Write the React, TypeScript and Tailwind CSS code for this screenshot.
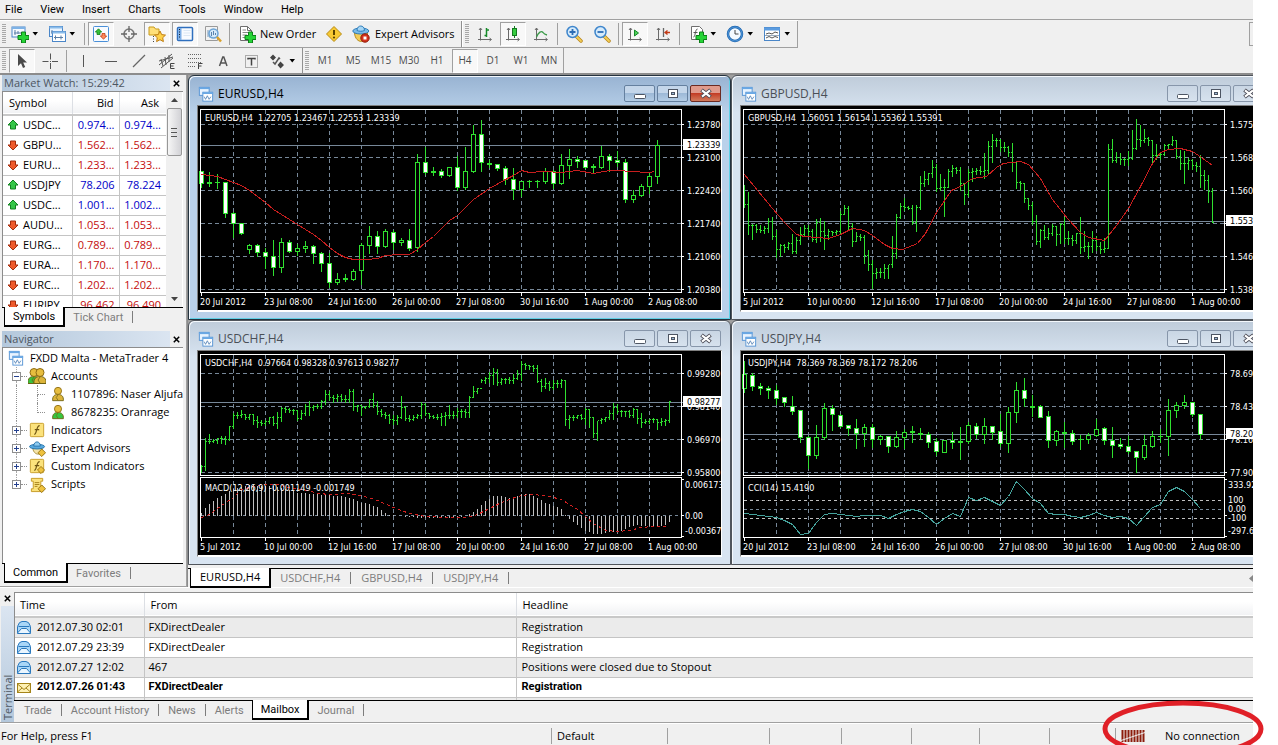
import React from "react";

/* ---------- chart data: three units per pixel ---------- */

const rows = (s: string) => s.trim().split(/\s*,\s*/).map((r) => r.split(" "));

// high, body top, body bottom, low, kind (d = filled, u = hollow)
const EURUSD = rows(`295 298 335 345 d,297 330 334 342 u,303 330 332 350 u,327 331 424 437 d,418 424 455 497 d,
454 455 483 488 d,513 519 533 545 u,513 520 542 553 d,525 541 553 590 d,503 553 586 611 d,495 511 586 602 u,
501 511 539 542 d,513 529 538 551 u,506 522 529 541 u,517 522 545 575 d,539 543 574 597 d,540 574 632 647 d,
600 621 632 638 u,603 618 623 629 u,590 597 621 624 u,510 519 596 637 u,459 492 521 543 u,474 492 524 545 d,
468 477 524 527 u,473 480 510 531 d,495 505 512 520 u,470 504 530 536 d,245 271 526 539 u,224 270 301 306 d,
283 298 301 310 u,288 297 311 315 d,283 286 311 314 u,249 285 347 354 d,222 297 346 353 u,158 186 299 300 u,
141 186 271 299 d,262 274 277 285 u,273 277 290 296 d,279 289 323 337 d,285 322 353 381 d,324 328 352 373 u,
323 327 329 347 u,321 328 329 345 u,286 297 329 335 u,291 297 335 349 d,243 279 335 338 u,229 262 281 318 u,
250 263 268 285 d,265 266 286 289 d,273 284 287 302 u,220 253 285 290 u,244 253 265 297 d,235 264 270 283 d,
260 271 382 391 d,351 369 383 391 u,334 343 371 374 u,302 312 344 364 u,201 220 314 335 u`);

const USDJPY = rows(`128 170 211 222 u,163 171 206 217 d,192 205 211 230 d,201 211 217 242 d,198 216 240 258 d,
236 238 254 264 d,231 266 281 290 d,276 277 359 374 d,353 358 412 450 d,318 357 412 420 u,254 271 359 363 u,
259 270 290 338 d,286 291 324 328 d,318 322 331 353 d,302 331 347 392 d,316 327 346 384 u,315 327 364 387 d,
350 355 364 380 u,351 355 386 404 d,338 357 385 387 u,330 342 358 391 u,323 340 343 373 u,327 345 348 365 u,
340 349 374 387 d,358 370 401 412 d,365 367 402 404 u,341 368 373 390 d,326 370 373 425 u,310 322 371 375 u,
314 325 348 362 d,297 324 350 375 u,321 325 342 364 d,285 340 377 386 d,264 283 376 402 u,189 217 284 312 u,
177 216 241 264 d,228 265 268 294 u,259 265 297 299 d,276 295 368 388 d,335 340 368 381 u,310 342 347 387 d,
335 346 369 378 d,349 363 365 394 u,343 351 364 377 u,301 335 352 356 u,324 331 367 380 d,325 367 381 417 d,
357 380 386 390 d,353 386 401 406 d,396 399 418 463 d,348 381 419 423 u,338 355 385 389 u,330 354 356 373 u,
240 277 355 411 u,250 262 277 297 u,228 253 262 272 u,250 252 290 294 d,288 289 348 363 d`);

// high, low, close
const GBPUSD = rows(`337 405 398,357 487 460,453 503 461,455 480 471,458 481 475,459 483 468,436 481 447,434 502 494,
472 557 531,513 553 519,514 540 525,507 533 513,484 543 538,492 543 505,464 517 488,456 490 468,457 490 478,
470 508 503,440 510 450,435 508 478,446 533 490,469 503 478,475 491 480,472 487 478,416 487 427,397 428 408,
400 475 462,450 522 508,478 508 492,483 504 495,487 573 550,532 596 577,562 648 605,586 620 600,587 616 602,
574 618 590,576 620 578,490 587 545,424 560 437,390 440 404,375 415 405,399 413 410,398 458 452,397 478 405,
310 412 333,296 342 322,300 337 304,261 317 287,275 359 350,303 356 346,320 432 346,289 346 297,276 312 289,
283 304 295,282 356 333,330 396 368,290 374 300,286 327 297,287 307 296,279 308 298,240 320 296,204 308 223,
183 270 205,195 224 205,198 239 227,207 238 226,221 254 241,210 297 272,268 349 330,326 353 333,333 392 378,
377 413 400,388 458 448,428 517 507,468 525 476,456 502 495,467 502 483,454 489 463,462 521 488,452 513 457,
434 514 498,476 518 498,488 519 506,480 514 485,432 545 525,475 537 523,508 560 523,476 542 505,490 535 524,
509 543 531,497 542 529,215 530 232,200 270 266,237 270 255,240 276 262,255 281 262,236 279 258,171 262 228,
140 233 202,158 223 205,169 210 198,194 220 206,203 272 251,214 262 251,241 263 247,214 250 220,213 233 217,
191 219 204,202 258 253,232 293 275,236 335 275,257 291 265,258 293 281,267 297 284,246 345 310,291 352 325,
308 392 358,345 452 450`);

const USDCHF = rows(`440 462 446,357 457 370,347 376 370,360 373 366,358 377 362,353 375 360,353 378 365,321 368 325,
284 332 293,280 300 291,275 298 290,285 304 297,286 303 290,288 320 307,291 328 314,303 323 316,303 322 310,
294 317 297,292 322 315,280 332 297,264 310 272,265 282 275,268 283 276,271 290 278,274 307 300,275 303 285,
256 293 265,248 292 268,259 277 264,255 272 266,244 272 250,215 260 228,218 247 237,229 252 240,227 250 234,
226 251 244,228 254 243,212 253 220,212 278 264,258 279 263,261 293 268,261 271 265,240 269 243,222 269 262,
248 290 280,272 294 289,281 300 291,287 317 303,290 319 306,289 320 297,231 300 268,263 308 301,289 309 303,
288 307 298,287 300 293,250 302 258,252 292 287,283 300 294,288 300 297,285 304 298,283 323 295,280 323 292,
258 300 291,276 302 291,268 298 281,272 297 281,270 297 283,231 297 238,202 238 221,207 226 210,180 194 188,
175 195 180,160 193 172,148 200 162,150 203 192,178 200 184,177 196 185,175 196 187,165 195 180,154 184 168,
128 186 140,133 155 142,138 155 145,140 160 152,138 193 190,182 221 205,177 212 195,186 216 208,185 213 196,
183 207 195,182 208 187,184 321 305,290 330 297,290 307 297,289 302 291,287 304 300,268 320 273,270 328 297,
295 358 346,306 368 308,297 315 303,294 310 299,275 305 285,254 303 268,257 287 279,273 296 281,276 296 281,
275 298 293,269 298 275,273 315 301,283 328 312,301 317 310,300 316 305,297 314 305,300 333 313,298 323 310,
300 322 307,246 312 250`);

const EURUSD_MA =
  "46 308,94 313,142 332,166 341,190 354,214 372,238 390,262 411,286 428,334 458,382 488,406 505,430 527,454 544,478 557,502 563,540 561,574 559,598 550,640 547,670 547,694 532,718 512,742 494,790 446,814 430,862 383,910 349,958 323,982 309,1006 295,1030 300,1072 299,1126 302,1174 295,1222 303,1270 296,1300 295,1330 299,1390 301,1405 297";
const GBPUSD_MA =
  "46 306,88 358,130 410,166 452,202 486,226 494,262 497,298 498,334 486,370 470,406 474,430 491,466 518,490 530,520 531,566 515,590 484,622 420,668 356,694 343,730 320,772 314,803 285,823 273,847 271,875 267,898 278,935 320,970 383,1014 440,1053 480,1078 496,1126 504,1163 461,1198 408,1233 342,1270 275,1294 240,1318 231,1353 229,1390 238,1418 255,1450 281";
const MACD_SIGNAL =
  "46 598,70 588,106 563,142 537,166 515,190 507,230 500,270 500,310 507,346 515,400 525,430 530,490 527,526 533,574 548,622 568,670 585,718 596,780 597,840 598,874 590,898 578,946 553,994 535,1030 529,1078 531,1126 545,1174 575,1222 616,1258 637,1294 640,1330 637,1366 627,1402 625,1440 625";
// bar index, value
const MACD_ANCHORS = [
  [0, 583], [1, 567], [2, 556], [3, 546], [4, 538], [6, 527], [8, 510], [12, 500], [18, 503], [24, 522], [30, 529],
  [36, 534], [38, 542], [40, 553], [42, 556], [44, 566], [46, 582], [47, 589], [49, 592], [52, 595], [54, 598],
  [64, 598], [66, 592], [68, 580], [69, 570], [70, 560], [71, 548], [72, 541], [73, 533], [76, 534], [78, 541],
  [80, 526], [82, 526], [84, 538], [86, 552], [88, 562], [90, 571], [91, 590], [92, 602], [94, 620], [96, 636],
  [98, 647], [100, 647], [102, 640], [105, 637], [107, 625], [109, 620], [113, 624], [116, 620], [117, 611],
];
const CCI = [
  587, 590, 593, 596, 599, 607, 618, 650, 647, 614, 590, 585, 589, 592, 596, 592, 592, 592, 602, 590, 580, 574, 580,
  597, 618, 600, 586, 596, 538, 548, 538, 550, 563, 535, 489, 515, 541, 557, 586, 590, 590, 594, 599, 593, 583, 592,
  598, 595, 600, 622, 595, 568, 559, 521, 508, 521, 545, 570,
];

const px = (v: number) => Math.floor(v / 3) + 0.5;
const toPoints = (s: string) =>
  s.split(",").map((p) => p.split(" ").map((v) => px(Number(v))).join(",")).join(" ");

function macdAt(i: number) {
  let k = 0;
  while (k < MACD_ANCHORS.length - 2 && MACD_ANCHORS[k + 1][0] < i) k++;
  const [a, va] = MACD_ANCHORS[k];
  const [b, vb] = MACD_ANCHORS[k + 1];
  return va + ((vb - va) * (i - a)) / (b - a);
}

const DATES_A = ["20 Jul 2012", "23 Jul 08:00", "24 Jul 16:00", "26 Jul 00:00", "27 Jul 08:00", "30 Jul 16:00", "1 Aug 00:00", "2 Aug 08:00"];
const DATES_B = ["5 Jul 2012", "10 Jul 00:00", "12 Jul 16:00", "17 Jul 08:00", "20 Jul 00:00", "24 Jul 16:00", "27 Jul 08:00", "1 Aug 00:00"];

function Candles({ data }: { data: string[][] }) {
  return (
    <g stroke="#2fe02f" strokeWidth="1">
      {data.map((r, i) => {
        const [h, t, b, l] = r.map(Number);
        const x = 15.5 + 8 * i;
        const height = px(b) - px(t);
        return (
          <g key={i}>
            <line x1={x} x2={x} y1={px(h)} y2={px(l) + 0.5} />
            {height < 1 ? (
              <line x1={x - 2.5} x2={x + 2.5} y1={px(t)} y2={px(t)} />
            ) : (
              <rect x={x - 2} y={px(t)} width="4" height={height} fill={r[4] === "d" ? "#fff" : "#000"} />
            )}
          </g>
        );
      })}
    </g>
  );
}

function Bars({ data }: { data: string[][] }) {
  let d = "";
  let open = Number(data[0][2]);
  data.forEach((r, i) => {
    const [h, l, c] = r.map(Number);
    const x = 15.5 + 4 * i;
    d += `M${x} ${px(h)}V${px(l) + 0.5}M${x - 1.5} ${px(open)}H${x}M${x} ${px(c)}H${x + 1.5}`;
    open = c;
  });
  return <path d={d} stroke="#2fe02f" fill="none" />;
}

type ChartProps = {
  caption: string;
  dates: string[];
  bid: number;
  bidText: string;
  scale: string[];
  kind: "candles" | "bars";
  data: string[][];
  average?: string;
  indicator?: "macd" | "cci";
};

function Chart({ caption, dates, bid, bidText, scale, kind, data, average, indicator }: ChartProps) {
  const top = indicator ? 110 : 112;
  const bottom = indicator ? 472 : 661;
  const firstRow = indicator ? 166 : 157;
  const floor = indicator ? 659 : 661;
  const gridY = scale.map((_, i) => px(firstRow + 99 * i));
  const gridX = Array.from({ length: 15 }, (_, i) => 47.5 + 32 * i).filter((x) => x < 495);
  const side = (text: string, y: number, x = 499) => (
    <text key={text + y} x={x} y={y + 3} fill="#fff">
      {text}
    </text>
  );
  return (
    <svg
      width="523"
      height="204"
      viewBox="12 34 523 204"
      className="block shrink-0 bg-black font-['DejaVu_Sans_Condensed','Noto_Sans',sans-serif] text-[9px]"
      role="img"
      aria-label={caption}
    >
      <g transform={indicator ? "translate(0 1)" : undefined}>
        <g shapeRendering="crispEdges" strokeWidth="1" fill="none">
          <g stroke="#778899" strokeDasharray="4 3">
            {gridY.map((y) => (
              <line key={y} x1="15" x2="495" y1={y} y2={y} />
            ))}
            {gridX.map((x) => (
              <line key={x} x1={x} x2={x} y1={px(top)} y2={px(floor)} />
            ))}
          </g>
          {indicator === "macd" && (
            <>
              <line x1="15" x2="495" y1="197.5" y2="197.5" stroke="#778899" strokeDasharray="3 3" />
              <path
                d={data.map((_, i) => `M${15.5 + 4 * i} 197.5V${px(macdAt(i)) + (macdAt(i) > 592 ? 0.5 : 0)}`).join("")}
                stroke="#c0c0c0"
              />
              <polyline points={toPoints(MACD_SIGNAL)} stroke="#d02020" strokeDasharray="3 3" />
            </>
          )}
          {indicator === "cci" && (
            <>
              <line x1="15" x2="495" y1="191.5" y2="191.5" stroke="#778899" strokeDasharray="3 3" />
              <path d="M15 182.5H495M15 200.5H495" stroke="#c0c0c0" strokeDasharray="3 3" />
              <polyline points={CCI.map((v, i) => `${15.5 + 8 * i},${px(v)}`).join(" ")} stroke="#45a39c" />
            </>
          )}
          <line x1="15" x2="497" y1={px(bid)} y2={px(bid)} stroke="#778899" />
          {kind === "candles" ? <Candles data={data} /> : <Bars data={data} />}
          {average && <polyline points={toPoints(average)} stroke="#c81e1e" />}
          <g stroke="#fff">
            <rect x="14.5" y={px(top)} width="481" height={px(bottom) - px(top)} />
            {indicator && <rect x="14.5" y="159.5" width="481" height="60" />}
            {gridY.map((y) => (
              <line key={y} x1="496" x2="498" y1={y} y2={y} />
            ))}
            {indicator && <path d="M496 161.5H498M496 197.5H498M496 218.5H498" />}
            {dates.map((d, i) => (
              <line key={d} x1={15.5 + 64 * i} x2={15.5 + 64 * i} y1={px(floor)} y2={px(floor) + 3} />
            ))}
          </g>
        </g>
        <text x="19" y={indicator ? 48 : 49} fill="#fff">
          {caption}
        </text>
        {indicator && (
          <text x="19" y="173" fill="#fff">
            {indicator === "macd" ? "MACD(12,26,9) -0.001149 -0.001749" : "CCI(14) 15.4190"}
          </text>
        )}
        {scale.map((s, i) => side(s, gridY[i], 501))}
        {indicator === "macd" && [side("0.006173", 166.5), side("0.00", 197.5), side("-0.00367", 212.5)]}
        {indicator === "cci" && [
          side("333.92", 166.5),
          side("100", 182),
          side("0.00", 191),
          side("-100", 200),
          side("-297.6", 212.5),
        ]}
        <rect x="497" y={px(bid) - 6.5} width="38" height="11" fill="#fff" />
        <text x="501" y={px(bid) + 2} fill="#000">
          {bidText}
        </text>
        {dates.map((d, i) => (
          <text key={d} x={14 + 64 * i} y={indicator ? 232 : 233} fill="#fff">
            {d}
          </text>
        ))}
      </g>
    </svg>
  );
}

/* ---------- icons ---------- */

const Svg = ({ children, s = 18, className = "" }: { children: React.ReactNode; s?: number; className?: string }) => (
  <svg width={s} height={s} viewBox="0 0 18 18" fill="none" className={`block shrink-0 ${className}`} aria-hidden="true">
    {children}
  </svg>
);
const Plus = () => (
  <path d="M10.500 7h4v3.500H18v4h-3.500V18h-4v-3.500H7v-4h3.500z" fill="#25d436" stroke="#0c7f18" strokeWidth="1" />
);
const Caret = () => (
  <svg width="7" height="4" viewBox="0 0 7 4" className="block shrink-0" aria-hidden="true">
    <path d="M0.500 0h5.500L3.250 3.500z" fill="#000" />
  </svg>
);
const NewChart = () => (
  <Svg>
    <rect x="1" y="2" width="13" height="10" fill="#f4f9ff" stroke="#4a86c8" />
    <path d="M1 3h13" stroke="#7db2e6" strokeWidth="2" />
    <path d="M4 5v5M3 8h8M7 6v3" stroke="#5b7fa6" />
    <Plus />
  </Svg>
);
const Profiles = ({ s = 18 }: { s?: number }) => (
  <Svg s={s}>
    <rect x="1.500" y="1.500" width="13" height="10" fill="#eaf4ff" stroke="#4a86c8" />
    <rect x="1.500" y="1.500" width="13" height="2" fill="#8abcea" />
    <path d="M4 5v4M3 7h5" stroke="#5b7fa6" />
    <rect x="4.500" y="6.500" width="13" height="10" fill="#fff" stroke="#4a86c8" />
    <rect x="4.500" y="6.500" width="13" height="2" fill="#8abcea" />
    <path d="M7.500 10.500v4M6 12.500h9M13 10.500v4" stroke="#5b7fa6" />
  </Svg>
);
const Wave = ({ s = 16 }: { s?: number }) => (
  <Svg s={s}>
    <rect x="1.500" y="1.500" width="11" height="9" fill="#e8f3ff" stroke="#4f8fd2" />
    <path d="M1 2.500h12" stroke="#6aa8e4" strokeWidth="2" />
    <rect x="5.500" y="7" width="11" height="10" fill="#fff" stroke="#4f8fd2" />
    <path d="M5 8h12" stroke="#6aa8e4" strokeWidth="2" />
    <path d="M7 12l1.500 3 2-4 2 4 2-3" stroke="#5a86b8" />
  </Svg>
);
const MarketWatchIcon = () => (
  <Svg>
    <rect x="1.500" y="1.500" width="15" height="15" rx="1" fill="#f8fbff" stroke="#4a90d9" />
    <path d="M6.500 3.800L9.700 7H8v2.500H5V7H3.300z" fill="#35c03a" stroke="#15801a" strokeWidth=".8" />
    <path d="M11.500 14.200L14.700 11H13V8.500h-3V11H8.300z" fill="#ff8a5c" stroke="#c23a13" strokeWidth=".8" />
  </Svg>
);
const Target = () => (
  <Svg>
    <circle cx="9" cy="9" r="5" stroke="#777" strokeWidth="1.500" />
    <path d="M9 1v6M9 11v6M1 9h6M11 9h6" stroke="#666" strokeWidth="1.300" />
  </Svg>
);
const StarFolder = () => (
  <Svg>
    <path d="M1 2h5l1.500 2H11v6H1z" fill="#ffe07a" stroke="#c79a1c" />
    <path d="M5.500 11v6" stroke="#444" strokeDasharray="1 1.500" />
    <path d="M12 6l1.700 3.600 3.800.5-2.800 2.600.7 3.900L12 14.700l-3.400 1.900.7-3.900-2.800-2.600 3.800-.5z" fill="#ffd24a" stroke="#c07e12" />
  </Svg>
);
const DataWindow = () => (
  <Svg>
    <rect x="1.500" y="2.500" width="15" height="13" rx="1" fill="#f8fbff" stroke="#2f6fbe" strokeWidth="1.500" />
    <rect x="2" y="3" width="3.500" height="12" fill="#7fb0e8" />
    <path d="M3.500 4v10" stroke="#123" strokeDasharray="1 1.500" />
    <path d="M7.500 5.500h7M7.500 8h7M7.500 10.500h7" stroke="#dbe7f4" />
  </Svg>
);
const Tester = () => (
  <Svg>
    <path d="M1.500 1.500h12v14h-12z" fill="#f2f2f2" stroke="#9a9a9a" />
    <path d="M4 12V5M6 13V8" stroke="#7b9ab8" />
    <circle cx="9.500" cy="8.500" r="4.500" fill="#d5eafa" stroke="#6aa3d6" strokeWidth="1.500" />
    <path d="M7.500 7v4M9.500 6v4M11.500 8v2" stroke="#5a83ad" />
    <path d="M13 12l4 4.500" stroke="#d8a12d" strokeWidth="2.500" />
  </Svg>
);
const NewOrder = () => (
  <Svg>
    <path d="M2.500 1.500h7l4 4v10h-11z" fill="#fff" stroke="#6e6e6e" />
    <path d="M9.500 1.500v4h4" stroke="#6e6e6e" />
    <path d="M4.500 5h3.500M4.500 7.500H11M4.500 10H9M4.500 12.500H8" stroke="#888" />
    <Plus />
  </Svg>
);
const Warning = () => (
  <Svg>
    <path d="M9 1.500L16.500 9 9 16.500 1.500 9z" fill="#f7c933" stroke="#b88a10" strokeLinejoin="round" />
    <path d="M9 5v5" stroke="#5a4300" strokeWidth="2" />
    <circle cx="9" cy="12.500" r="1.100" fill="#5a4300" />
  </Svg>
);
const ExpertStop = () => (
  <Svg>
    <path d="M2.500 8c.5 6 4 8.500 7 8.500s5.500-3 6-8.500z" fill="#f3cd58" stroke="#b98c1d" />
    <ellipse cx="8.800" cy="6" rx="8" ry="3" fill="#79bbe8" stroke="#2f7dba" />
    <path d="M5 5.500c0-6 7.500-6 7.500 0-2 1-5.500 1-7.500 0z" fill="#a6d6f5" stroke="#2f7dba" />
    <circle cx="13" cy="13" r="4.200" fill="#d5331c" stroke="#8f1c0c" />
    <rect x="11.500" y="11.500" width="3" height="3" fill="#fff" />
  </Svg>
);
const Axes = () => <path d="M4.500 3v12.500M2 14.500h13M3 5l1.500-2L6 5M13.500 13l2 1.500-2 1.500" stroke="#6a6a6a" />;
const BarChart = () => (
  <Svg>
    <Axes />
    <path d="M10.500 3v9M8.500 10.500h2M10.500 5h2.500" stroke="#178a2a" strokeWidth="1.500" />
  </Svg>
);
const CandleChart = () => (
  <Svg>
    <Axes />
    <path d="M10.500 1v12" stroke="#147a20" />
    <rect x="8.500" y="3.500" width="4" height="7" fill="#35cc3f" stroke="#147a20" />
  </Svg>
);
const LineChart = () => (
  <Svg>
    <Axes />
    <path d="M4.500 12c2-5 5-6.500 6.500-4.500 1 1.500 2 2 4 2.500" stroke="#3a9a48" strokeWidth="1.300" />
  </Svg>
);
const Zoom = ({ plus }: { plus?: boolean }) => (
  <Svg>
    <path d="M11.500 11.500l4.500 4.500" stroke="#b8861c" strokeWidth="3.500" strokeLinecap="round" />
    <path d="M11.500 11.500l4.500 4.500" stroke="#f4cf56" strokeWidth="1.800" strokeLinecap="round" />
    <circle cx="7.500" cy="7" r="5.500" fill="#d6ebfb" stroke="#3f86cc" strokeWidth="1.500" />
    <path d={plus ? "M4.500 7h6M7.500 4v6" : "M4.500 7h6"} stroke="#2c6db5" strokeWidth="1.800" />
  </Svg>
);
const AutoScroll = () => (
  <Svg>
    <Axes />
    <path d="M8.500 5v6l4-3z" fill="#4fd45a" stroke="#178a2a" />
  </Svg>
);
const Shift = () => (
  <Svg>
    <Axes />
    <path d="M9.500 3v9" stroke="#666" strokeWidth="1.300" />
    <path d="M11 7.500h5M13.500 5.500l-2.500 2 2.500 2" stroke="#c23a16" strokeWidth="1.300" />
  </Svg>
);
const IndicatorsIcon = () => (
  <Svg>
    <path d="M2.500 1.500h8l3 3v10h-11z" fill="#fff" stroke="#6e6e6e" />
    <path d="M4.500 12c2 0 1.500-8 4-8M4.500 7.500h4" stroke="#555" />
    <Plus />
  </Svg>
);
const Clock = () => (
  <Svg>
    <circle cx="9" cy="9" r="7" fill="#f4faff" stroke="#1f66b0" strokeWidth="2.500" />
    <circle cx="9" cy="9" r="7" stroke="#5ea4e4" strokeWidth=".8" />
    <path d="M9 5v4h3.500" stroke="#444" />
  </Svg>
);
const Template = () => (
  <Svg>
    <rect x="1.500" y="2.500" width="15" height="13" fill="#fff" stroke="#4a86c8" />
    <path d="M1 4h16" stroke="#5b9ce0" strokeWidth="3" />
    <path d="M3 9l3-1 3 1 3-2 3 1M3 13l3-1.500 3 1.500 3-1.500 3 1" stroke="#555" />
    <path d="M2 10.500h14" stroke="#9ab" />
  </Svg>
);
const Cursor = () => (
  <Svg>
    <path d="M5 2v12l3-2.800 2 4.800 2.200-1-2-4.600H14z" fill="#4a4a4a" />
  </Svg>
);
const Cross = () => (
  <Svg>
    <path d="M9.500 1.500v6M9.500 11v6M1.500 9.500h6M11 9.500h6M9 9.500h1" stroke="#555" />
  </Svg>
);
const VLine = () => <Svg><path d="M9.500 3v12" stroke="#555" /></Svg>;
const HLine = () => <Svg><path d="M3 9.500h12" stroke="#555" /></Svg>;
const Trend = () => <Svg><path d="M3 15L15 3" stroke="#666" strokeWidth="1.300" /></Svg>;
const Equi = () => (
  <Svg>
    <path d="M1 13L14 2M3 16L15 6M3 7l2 7M7 5l1 8M11 3v7M1 9l14-4" stroke="#555" />
    <path d="M16.500 11.500h-4v5h4M12.500 14h3" stroke="#444" />
  </Svg>
);
const Fibo = () => (
  <Svg>
    <path d="M2 2.500h14M2 6.500h14M2 10.500h14M2 14.500h8" stroke="#666" strokeDasharray="1 1" />
    <path d="M16.500 11.500h-4v5.500M12.500 14h3" stroke="#444" />
  </Svg>
);
const TextA = () => <Svg><path d="M5.500 14L8.800 5h1L13 14M7 11h4.500" stroke="#555" strokeWidth="1.500" /></Svg>;
const TextLabel = () => (
  <Svg>
    <rect x="3.500" y="3.500" width="12" height="12" stroke="#666" strokeDasharray="1 1" />
    <path d="M6 7.500V6.500h7v1M9.500 6.500v7" stroke="#444" strokeWidth="1.500" />
  </Svg>
);
const Arrows = () => (
  <Svg>
    <path d="M5 2.500l3 3-3 3-3-3zM12.500 9.500l3.500 3.500-3.500 3.500L9.500 13z" fill="#444" />
    <path d="M5 10l2 2 4-6 1 1" stroke="#555" strokeWidth="1.500" />
  </Svg>
);
const Direction = ({ up }: { up: boolean }) => (
  <svg width="12" height="12" viewBox="0 0 12 12" className="block" aria-hidden="true">
    {up ? (
      <path d="M6 1l5 5H8.500v4h-5V6H1z" fill="#35c648" stroke="#12801f" />
    ) : (
      <path d="M6 11l5-5H8.500V2h-5v4H1z" fill="#ee5a2c" stroke="#a32c0c" />
    )}
  </svg>
);
const Person = ({ body, x = 0 }: { body: string; x?: number }) => (
  <g transform={`translate(${x} 0)`}>
    <path d="M3 16.500c-.5-5 2-7 6-7s6.500 2 6 7z" fill={body} stroke="#6f6212" />
    <circle cx="9" cy="5.500" r="4" fill="#e6bd3e" stroke="#8d6b12" />
    <path d="M9 10l-2 3 2 3" stroke="#6f6212" strokeWidth=".8" />
  </g>
);
const Accounts = () => (
  <Svg>
    <Person body="#37c53e" x={-3} />
    <Person body="#dcb43a" x={3} />
  </Svg>
);
const FBox = ({ gem }: { gem?: boolean }) => (
  <Svg s={16}>
    <rect x="1.500" y="1.500" width="15" height="15" rx="1" fill="#fbe27c" stroke="#c69a24" />
    <path d="M6 14c3 0 2-10 6-10M6.500 8.500h5" stroke="#6d5413" strokeWidth="1.300" />
    {gem && <path d="M13.500 9.500l4 4-4 4-4-4z" fill="#efc23e" stroke="#94700f" />}
  </Svg>
);
const Hat = () => (
  <Svg s={17}>
    <path d="M4 9c1 5 4 6 6 6s4-3 4-6z" fill="#f5e4a8" stroke="#a58c3a" />
    <ellipse cx="8.500" cy="7" rx="8" ry="2.500" fill="#58a9df" stroke="#2674ab" />
    <path d="M5 6.500c0-6 7-6 7 0z" fill="#8ccaf0" stroke="#2674ab" />
    <path d="M13.500 9.500l4 4-4 4-4-4z" fill="#efc23e" stroke="#94700f" />
  </Svg>
);
const Scroll = () => (
  <Svg s={17}>
    <path d="M2.500 2.500h12v3h-2v8h2v3h-12v-3h2v-8h-2z" fill="#fbe27c" stroke="#c69a24" />
    <path d="M6 7h5M6 9h5M6 11h3" stroke="#a57f1a" />
    <path d="M13.500 9.500l4 4-4 4-4-4z" fill="#efc23e" stroke="#94700f" />
  </Svg>
);
const OpenMail = () => (
  <svg width="14" height="13" viewBox="0 0 14 13" className="block" aria-hidden="true">
    <path d="M.5 5.500Q2 .5 5 .5h4q3 0 4.500 5v7H.5z" fill="#a9d6f7" stroke="#2a78bd" />
    <path d="M.5 12l4-4.500h5l4 4.500M1.500 5.500h11" stroke="#2a78bd" fill="#eaf6ff" />
  </svg>
);
const ClosedMail = () => (
  <svg width="14" height="13" viewBox="0 0 14 13" className="block" aria-hidden="true">
    <rect x=".5" y="2.500" width="13" height="9" fill="#fdf0b4" stroke="#a58419" />
    <path d="M.5 3L7 8.500 13.500 3M.5 11L5 7M13.500 11L9 7" stroke="#a58419" fill="none" />
  </svg>
);

/* ---------- toolbar ---------- */

const Grip = () => (
  <span className="mx-0.5 h-5 w-1 shrink-0 bg-[repeating-linear-gradient(180deg,#a8a8a8_0_1px,#f0f0f0_1px_2px)]" />
);
const Sep = () => <span className="mx-[2px] h-[22px] w-px shrink-0 bg-[#a0a0a0]" />;
const Tool = ({ label, on, children }: { label: string; on?: boolean; children: React.ReactNode }) => (
  <button
    type="button"
    aria-label={label}
    aria-pressed={on}
    className={`mx-px flex h-6 w-[26px] shrink-0 items-center justify-center border ${
      on ? "border-t-[#a0a0a0] border-r-white border-b-white border-l-[#a0a0a0] bg-[#f8f8f8]" : "border-transparent"
    }`}
  >
    {children}
  </button>
);
const Split = ({ label, children }: { label: string; children: React.ReactNode }) => (
  <button type="button" aria-label={label} className="flex h-6 w-[37px] shrink-0 items-center gap-[3px] pl-[3px]">
    {children}
    <Caret />
  </button>
);

function Toolbars() {
  return (
    <header className="shrink-0 border-b-2 border-b-[#8c8c8c]">
      <nav className="flex h-5 items-center gap-2 border-b border-[#a0a0a0] font-[Roboto,'Open_Sans',sans-serif] text-[11px] text-black">
        {["File", "View", "Insert", "Charts", "Tools", "Window", "Help"].map((m) => (
          <button key={m} type="button" className="px-[5px] leading-4">
            {m}
          </button>
        ))}
      </nav>
      <div className="flex h-7 items-stretch justify-between">
        <div className="flex items-stretch border-t border-b border-t-white border-b-[#a0a0a0]">
          <div className="flex items-center border-r border-[#909090] pr-0.5">
            <Grip />
            <Split label="New chart"><NewChart /></Split>
            <Split label="Profiles"><Profiles /></Split>
            <Sep />
            <Tool label="Market Watch" on><MarketWatchIcon /></Tool>
            <Tool label="Data pointer"><Target /></Tool>
            <Tool label="Navigator" on><StarFolder /></Tool>
            <Tool label="Terminal" on><DataWindow /></Tool>
            <Tool label="Strategy Tester"><Tester /></Tool>
            <Sep />
            <button type="button" className="flex h-6 items-center gap-1 pl-[6px]">
              <NewOrder />
              <span className="w-[60px] text-left text-[11px]">New Order</span>
            </button>
            <Tool label="Options"><Warning /></Tool>
            <button type="button" className="flex h-6 items-center gap-[5px] pl-1">
              <ExpertStop />
              <span className="w-[84px] text-left text-[11px] whitespace-nowrap">Expert Advisors</span>
            </button>
          </div>
          <div className="flex items-center border-r border-l border-[#a0a0a0] border-l-white">
            <Grip />
            <Tool label="Bar Chart"><BarChart /></Tool>
            <Tool label="Candlesticks" on><CandleChart /></Tool>
            <Tool label="Line Chart"><LineChart /></Tool>
            <Sep />
            <Tool label="Zoom In"><Zoom plus /></Tool>
            <Tool label="Zoom Out"><Zoom /></Tool>
            <Sep />
            <Tool label="Auto Scroll" on><AutoScroll /></Tool>
            <Tool label="Chart Shift"><Shift /></Tool>
            <Sep />
            <div className="flex pl-1">
              <Split label="Indicators"><IndicatorsIcon /></Split>
              <Split label="Periods"><Clock /></Split>
              <Split label="Templates"><Template /></Split>
            </div>
          </div>
        </div>
        <span className="my-0.5 w-1 border border-r-0 border-[#a0a0a0]" />
      </div>
      <div className="flex h-[25px] items-stretch">
        <div className="flex items-center border-r border-[#909090]">
          <Grip />
          <Tool label="Cursor" on><Cursor /></Tool>
          <Tool label="Crosshair"><Cross /></Tool>
          <Sep />
          <Tool label="Vertical Line"><VLine /></Tool>
          <Tool label="Horizontal Line"><HLine /></Tool>
          <Tool label="Trendline"><Trend /></Tool>
          <Tool label="Equidistant Channel"><Equi /></Tool>
          <Tool label="Fibonacci"><Fibo /></Tool>
          <Tool label="Text"><TextA /></Tool>
          <Tool label="Text Label"><TextLabel /></Tool>
          <Split label="Arrows"><Arrows /></Split>
        </div>
        <div className="flex items-center border-r border-[#a0a0a0]">
          <Grip />
          {["M1", "M5", "M15", "M30", "H1", "H4", "D1", "W1", "MN"].map((p) => (
            <Tool key={p} label={p} on={p === "H4"}>
              <span className="text-[10px] text-[#4c4c4c]">{p}</span>
            </Tool>
          ))}
        </div>
      </div>
    </header>
  );
}

/* ---------- docked panels ---------- */

const PanelTitle = ({ children }: { children: React.ReactNode }) => (
  <div className="flex h-4 items-center justify-between pr-px">
    <h2 className="h-full flex-1 bg-linear-to-r from-[#b4c8dc] to-[#dbe5f1] pl-0.5 text-[11px] leading-4 text-[#4d5661]">
      {children}
    </h2>
    <CloseX />
  </div>
);
const CloseX = () => (
  <button type="button" aria-label="Close" className="flex h-3 w-3 items-center justify-center">
    <svg width="7" height="7" viewBox="0 0 7 7" aria-hidden="true">
      <path d="M.8.8l5.400 5.400M6.200.8L.8 6.200" stroke="#000" strokeWidth="1.500" />
    </svg>
  </button>
);

type TabStripProps = { tabs: string[]; active: string; wide?: boolean };

function TabStrip({ tabs, active, wide }: TabStripProps) {
  return (
    <div
      role="tablist"
      className={`flex h-[19px] flex-1 text-[11px] ${wide ? "" : "font-[Roboto,'Open_Sans',sans-serif]"}`}
    >
      <span className="w-0.5 border-t border-black" />
      {tabs.map((t, i) =>
        t === active ? (
          <button
            key={t}
            type="button"
            role="tab"
            aria-selected="true"
            className={`-mb-px border border-t-0 border-r-2 border-b-2 border-black bg-white leading-4 text-black ${
              wide ? "px-[9px]" : "px-2 pt-0.5"
            }`}
          >
            {t}
          </button>
        ) : (
          <span key={t} className="flex items-center border-t border-black">
            <button
              type="button"
              role="tab"
              aria-selected="false"
              className={`leading-4 text-[#7d7d7d] ${wide ? "px-[9px]" : "px-2 pt-0.5"}`}
            >
              {t}
            </button>
            {tabs[i + 1] !== active && <span className="mx-px h-3 w-px bg-[#7d7d7d]" />}
          </span>
        ),
      )}
      <span className="flex-1 border-t border-black" />
    </div>
  );
}

const QUOTES: [string, string, string, boolean][] = [
  ["USDC...", "0.974...", "0.974...", true],
  ["GBPU...", "1.562...", "1.562...", false],
  ["EURU...", "1.233...", "1.233...", false],
  ["USDJPY", "78.206", "78.224", true],
  ["USDC...", "1.001...", "1.002...", true],
  ["AUDU...", "1.053...", "1.053...", false],
  ["EURG...", "0.789...", "0.789...", false],
  ["EURA...", "1.170...", "1.170...", false],
  ["EURC...", "1.202...", "1.202...", false],
  ["EURJPY", "96.462", "96.490", false],
];

function MarketWatch() {
  return (
    <section>
      <PanelTitle>Market Watch: 15:29:42</PanelTitle>
      <div className="flex h-[216px] overflow-hidden border-t border-l border-[#8c8c8c] bg-white">
        <div className="w-[163px]">
          <table className="w-full table-fixed border-collapse text-[11px]">
            <thead>
              <tr className="h-[23px] border-b-2 border-[#c8c8c8] bg-linear-to-b from-white from-40% to-[#f1f2f4]">
                <th className="w-[69px] border-r border-[#dcdfe4] pl-1.5 text-left font-normal">Symbol</th>
                <th className="border-r border-[#dcdfe4] pr-[5px] text-right font-normal">Bid</th>
                <th className="pr-[7px] text-right font-normal">Ask</th>
              </tr>
            </thead>
            <tbody>
              {QUOTES.map(([s, b, a, up], i) => (
                <tr key={i} className={`h-5 border-b border-[#c4c4c4] ${up ? "text-[#0000c8]" : "text-[#c40c0c]"}`}>
                  <td className="border-r border-[#c4c4c4] pl-1 text-black">
                    <span className="flex items-center gap-1">
                      <Direction up={up} />
                      {s}
                    </span>
                  </td>
                  <td className="border-r border-[#c4c4c4] pr-1 text-right">{b}</td>
                  <td className="pr-[5px] text-right">{a}</td>
                </tr>
              ))}
            </tbody>
          </table>
        </div>
        <div className="flex w-4 flex-col items-center bg-[#f0f0f0] py-1.5">
          <svg width="7" height="4" viewBox="0 0 7 4" className="mb-1.5" aria-hidden="true">
            <path d="M0 4h7L3.500 0z" fill="#444" />
          </svg>
          <span className="flex h-12 w-[15px] flex-col items-center justify-center gap-px rounded-xs border border-[#979797] bg-linear-to-r from-[#f6f6f6] to-[#d2d2d6]">
            <span className="h-px w-1.5 bg-[#555]" />
            <span className="h-px w-1.5 bg-[#ddd]" />
            <span className="h-px w-1.5 bg-[#555]" />
            <span className="h-px w-1.5 bg-[#ddd]" />
            <span className="h-px w-1.5 bg-[#555]" />
          </span>
          <svg width="7" height="4" viewBox="0 0 7 4" className="mt-auto" aria-hidden="true">
            <path d="M0 0h7L3.500 4z" fill="#444" />
          </svg>
        </div>
      </div>
      <TabStrip tabs={["Symbols", "Tick Chart"]} active="Symbols" />
    </section>
  );
}

const Toggle = ({ open }: { open?: boolean }) => (
  <button type="button" aria-label={open ? "Collapse" : "Expand"} aria-expanded={!!open} className="block">
    <svg width="9" height="9" viewBox="0 0 9 9" className="block" aria-hidden="true">
      <rect x=".5" y=".5" width="8" height="8" fill="#fff" stroke="#8f8f8f" />
      <path d={open ? "M2 4.500h5" : "M2 4.500h5M4.500 2v5"} stroke="#24408e" />
    </svg>
  </button>
);
const Branch = ({ open, last }: { open?: boolean; last?: boolean }) => (
  <span className="flex h-full w-[15px] items-center">
    <span className="flex h-full flex-col items-center">
      <span className="flex-1 border-l border-dotted border-[#a8a8a8]" />
      <Toggle open={open} />
      <span className={`flex-1 border-l border-dotted ${last ? "border-transparent" : "border-[#a8a8a8]"}`} />
    </span>
    <span className="flex-1 border-t border-dotted border-[#909090]" />
  </span>
);
const treeRow = "flex h-[18px] items-center whitespace-nowrap";

function Navigator() {
  return (
    <section>
      <PanelTitle>Navigator</PanelTitle>
      <div className="h-[216px] overflow-hidden border-t border-l border-[#8c8c8c] bg-white pt-px text-[11px] text-black">
        <ul className="pl-[9px]">
          <li className={`${treeRow} -ml-1 gap-1.5`}>
            <Wave />
            FXDD Malta - MetaTrader 4
          </li>
          <li>
            <div className={treeRow}>
              <Branch open />
              <span className="ml-px mr-[5px]">
                <Accounts />
              </span>
              Accounts
            </div>
            <ul className="ml-1 border-l border-dotted border-[#909090] pl-5">
              {[
                ["1107896: Naser Aljufa", "#dcb43a"],
                ["8678235: Oranrage", "#37c53e"],
              ].map(([t, c], i) => (
                <li key={t} className={treeRow}>
                  <span className="flex h-full w-2 shrink-0 flex-col">
                    <span className="flex-1 border-b border-l border-dotted border-[#909090]" />
                    <span className={`flex-1 border-l border-dotted ${i === 0 ? "border-[#909090]" : "border-transparent"}`} />
                  </span>
                  <Svg s={16} className="mx-[5px]">
                    <Person body={c} />
                  </Svg>
                  {t}
                </li>
              ))}
            </ul>
          </li>
          {[
            ["Indicators", <FBox key="f" />],
            ["Expert Advisors", <Hat key="h" />],
            ["Custom Indicators", <FBox key="g" gem />],
            ["Scripts", <Scroll key="s" />],
          ].map(([t, icon]) => (
            <li key={t as string} className={treeRow}>
              <Branch last={t === "Scripts"} />
              <span className="ml-0.5 w-[22px]">{icon}</span>
              {t}
            </li>
          ))}
        </ul>
      </div>
      <TabStrip tabs={["Common", "Favorites"]} active="Common" />
    </section>
  );
}

/* ---------- chart windows ---------- */

const WinButton = ({ kind, active }: { kind: "Minimize" | "Restore" | "Close"; active?: boolean }) => {
  const skin = !active
    ? "border-[#8796aa] bg-linear-to-b from-[#c9d6e4] to-[#d7e2ee]"
    : kind === "Close"
      ? "border-[#6b2a22] bg-linear-to-b from-[#e09a8c] from-45% via-[#c33c25] via-50% to-[#d27a5c]"
      : "border-[#65809f] bg-linear-to-b from-[#c4d6ea] from-45% via-[#9db9d7] via-50% to-[#b4cde6]";
  return (
    <button type="button" aria-label={kind} className={`flex h-[17px] w-[31px] items-center justify-center rounded-xs border ${skin}`}>
      <svg width="12" height="11" viewBox="0 0 12 11" aria-hidden="true">
        {kind === "Minimize" && <rect x=".5" y="6.500" width="11" height="4" rx="1" fill="#fff" stroke="#4d5563" />}
        {kind === "Restore" && (
          <>
            <rect x="1.500" y="1.500" width="9" height="8" fill="#fff" stroke="#4d5563" />
            <rect x="4.500" y="4.500" width="3" height="2" fill="#9db9d7" stroke="#4d5563" />
          </>
        )}
        {kind === "Close" && (
          <>
            <path d="M1.500 2l9 7M10.500 2l-9 7" stroke="#4d4d58" strokeWidth="4" />
            <path d="M2 2.400l8 6.200M10 2.400L2 8.600" stroke="#fff" strokeWidth="2" />
          </>
        )}
      </svg>
    </button>
  );
};

function ChartWindow({ title, active, children }: { title: string; active?: boolean; children: React.ReactNode }) {
  return (
    <article
      className={`flex flex-col rounded-t-md border px-2 pb-[7px] ${
        active
          ? "border-[#25333f] bg-linear-to-b from-[#98b3d2] to-[#b9d1ea] to-15% shadow-[inset_1px_1px_0_#f2f8fd,inset_-1px_-1px_0_#5fd0e6]"
          : "border-[#50555c] bg-linear-to-b from-[#bfccda] to-[#d8e4f1] to-15% shadow-[inset_1px_1px_0_#f4f8fc]"
      }`}
    >
      <div className="flex h-[29px] items-center gap-0.5 pt-1.5 pr-px pl-px">
        <Wave />
        <h3 className={`flex-1 pl-0.5 text-xs leading-4 ${active ? "text-black" : "text-[#4a4f57]"}`}>{title}</h3>
        <WinButton kind="Minimize" active={active} />
        <WinButton kind="Restore" active={active} />
        <WinButton kind="Close" active={active} />
      </div>
      <div className="border border-t-[#808080] border-r-white border-b-white border-l-[#808080] bg-white pb-px">
        {children}
      </div>
    </article>
  );
}

function Workspace() {
  return (
    <main className="flex min-w-0 flex-1 flex-col border-l border-[#8c8c8c]">
      <div className="overflow-hidden bg-[#a0a0a0]">
        <div className="grid w-max grid-cols-2">
          <ChartWindow title="EURUSD,H4" active>
            <Chart
              caption={"EURUSD,H4\u00a0 1.22705 1.23467 1.22553 1.23339"}
              dates={DATES_A}
              bid={220}
              bidText="1.23339"
              scale={["1.23780", "1.23100", "1.22420", "1.21740", "1.21060", "1.20380"]}
              kind="candles"
              data={EURUSD}
              average={EURUSD_MA}
            />
          </ChartWindow>
          <ChartWindow title="GBPUSD,H4">
            <Chart
              caption={"GBPUSD,H4\u00a0 1.56051 1.56154 1.55362 1.55391"}
              dates={DATES_B}
              bid={449}
              bidText="1.553"
              scale={["1.575", "1.568", "1.560", "", "1.546", "1.538"]}
              kind="bars"
              data={GBPUSD}
              average={GBPUSD_MA}
            />
          </ChartWindow>
          <ChartWindow title="USDCHF,H4">
            <Chart
              caption={"USDCHF,H4\u00a0 0.97664 0.98328 0.97613 0.98277"}
              dates={DATES_B}
              bid={253}
              bidText="0.98277"
              scale={["0.99280", "0.98140", "0.96970", "0.95800"]}
              kind="bars"
              data={USDCHF}
              indicator="macd"
            />
          </ChartWindow>
          <ChartWindow title="USDJPY,H4">
            <Chart
              caption={"USDJPY,H4\u00a0 78.369 78.369 78.172 78.206"}
              dates={DATES_A}
              bid={349}
              bidText="78.20"
              scale={["78.69", "78.43", "78.16", "77.90"]}
              kind="candles"
              data={USDJPY}
              indicator="cci"
            />
          </ChartWindow>
        </div>
      </div>
      <div className="mt-[3px] flex">
        <TabStrip tabs={["EURUSD,H4", "USDCHF,H4", "GBPUSD,H4", "USDJPY,H4"]} active="EURUSD,H4" wide />
        <span className="flex items-center border-t border-black">
          <svg width="4" height="7" viewBox="0 0 4 7" aria-hidden="true">
            <path d="M4 0v7L0 3.500z" fill="#888" />
          </svg>
        </span>
      </div>
    </main>
  );
}

/* ---------- terminal ---------- */

const MAIL = [
  ["2012.07.30 02:01", "FXDirectDealer", "Registration"],
  ["2012.07.29 23:39", "FXDirectDealer", "Registration"],
  ["2012.07.27 12:02", "467", "Positions were closed due to Stopout"],
  ["2012.07.26 01:43", "FXDirectDealer", "Registration"],
];

function Terminal() {
  return (
    <section className="flex h-[131px] border-b border-[#a0a0a0]">
      <div className="flex w-[14px] flex-col items-center">
        <CloseX />
        <h2 className="mt-0.5 w-[13px] flex-1 rotate-180 bg-linear-to-b from-[#b4c8dc] to-[#dbe5f1] pt-0.5 text-[11px] leading-[13px] text-[#4d5661] [writing-mode:vertical-rl]">
          Terminal
        </h2>
      </div>
      <div className="min-w-0 flex-1">
        <div className="h-[108px] overflow-hidden border-t border-l border-[#8c8c8c] bg-white">
          <table className="w-full table-fixed border-collapse text-[11px] text-black">
            <thead>
              <tr className="h-6 border-b-2 border-[#c8c8c8] bg-linear-to-b from-white from-40% to-[#f1f2f4] text-left">
                <th className="w-[129px] border-r border-[#dcdfe4] pt-0.5 pl-[5px] font-normal">Time</th>
                <th className="w-[372px] border-r border-[#dcdfe4] pt-0.5 pl-1.5 font-normal">From</th>
                <th className="pt-0.5 pl-1.5 font-normal">Headline</th>
              </tr>
            </thead>
            <tbody>
              {MAIL.map(([t, f, h], i) => (
                <tr
                  key={t}
                  className={`h-5 border-b border-[#c4c4c4] ${i % 2 ? "bg-white" : "bg-[#ebebeb]"} ${
                    i === 3 ? "font-[Roboto,'Open_Sans',sans-serif] font-bold" : ""
                  }`}
                >
                  <td className="border-r border-[#c4c4c4] pl-0.5">
                    <span className="flex items-center gap-1.5">
                      {i === 3 ? <ClosedMail /> : <OpenMail />}
                      {t}
                    </span>
                  </td>
                  <td className="border-r border-[#c4c4c4] pl-1">{f}</td>
                  <td className="pl-[5px]">{h}</td>
                </tr>
              ))}
              <tr className="h-5 bg-[#ebebeb]">
                <td className="border-r border-[#c4c4c4]" />
                <td className="border-r border-[#c4c4c4]" />
                <td />
              </tr>
            </tbody>
          </table>
        </div>
        <TabStrip tabs={["Trade", "Account History", "News", "Alerts", "Mailbox", "Journal"]} active="Mailbox" />
      </div>
    </section>
  );
}

function StatusBar() {
  return (
    <footer className="flex h-[22px] items-center border-t border-white pt-[3px] text-[11px] text-black">
      <span className="w-[551px] pl-px">For Help, press F1</span>
      <span className="h-4 w-[116px] border-l border-[#a0a0a0] pl-[5px] leading-4">Default</span>
      {["w-[102px]", "w-[72px]", "w-[70px]", "w-[68px]", "w-[70px]", "w-[66px]"].map((w, i) => (
        <span key={i} className={`h-4 border-l border-[#a0a0a0] ${w}`} />
      ))}
      <span className="flex h-4 flex-1 items-center gap-5 border-l border-[#a0a0a0] pl-[5px] whitespace-nowrap">
        <svg width="24" height="12" viewBox="0 0 24 12" aria-hidden="true">
          <path d="M1.500 0v12M4.500 0v12M7.500 0v12M10.500 0v12M13.500 0v12M16.500 0v12M19.500 0v12M22.500 0v12" stroke="#8c1c0c" strokeWidth="2" />
          <path d="M0 10.500L24 2.500" stroke="#f0f0f0" strokeWidth="1" />
        </svg>
        No connection
      </span>
    </footer>
  );
}

export default function App() {
  return (
    <div className="min-h-screen overflow-hidden bg-white pr-[25px] font-['Open_Sans','Noto_Sans',sans-serif]">
      <div className="relative bg-[#f0f0f0]">
        <Toolbars />
        <div className="flex">
          <aside className="w-[187px] shrink-0">
            <div className="flex flex-col gap-[5px] border-r border-b border-[#a0a0a0] pr-[3px] pb-1 pl-0.5">
              <MarketWatch />
              <Navigator />
            </div>
          </aside>
          <Workspace />
        </div>
        <div className="h-[5px] border-t border-white" />
        <Terminal />
        <StatusBar />
        <svg width="164" height="60" viewBox="0 0 164 60" className="absolute -right-3 -bottom-[14px]" aria-hidden="true">
          <ellipse cx="82" cy="30" rx="78" ry="26" fill="none" stroke="#e02027" strokeWidth="5" />
        </svg>
      </div>
    </div>
  );
}
